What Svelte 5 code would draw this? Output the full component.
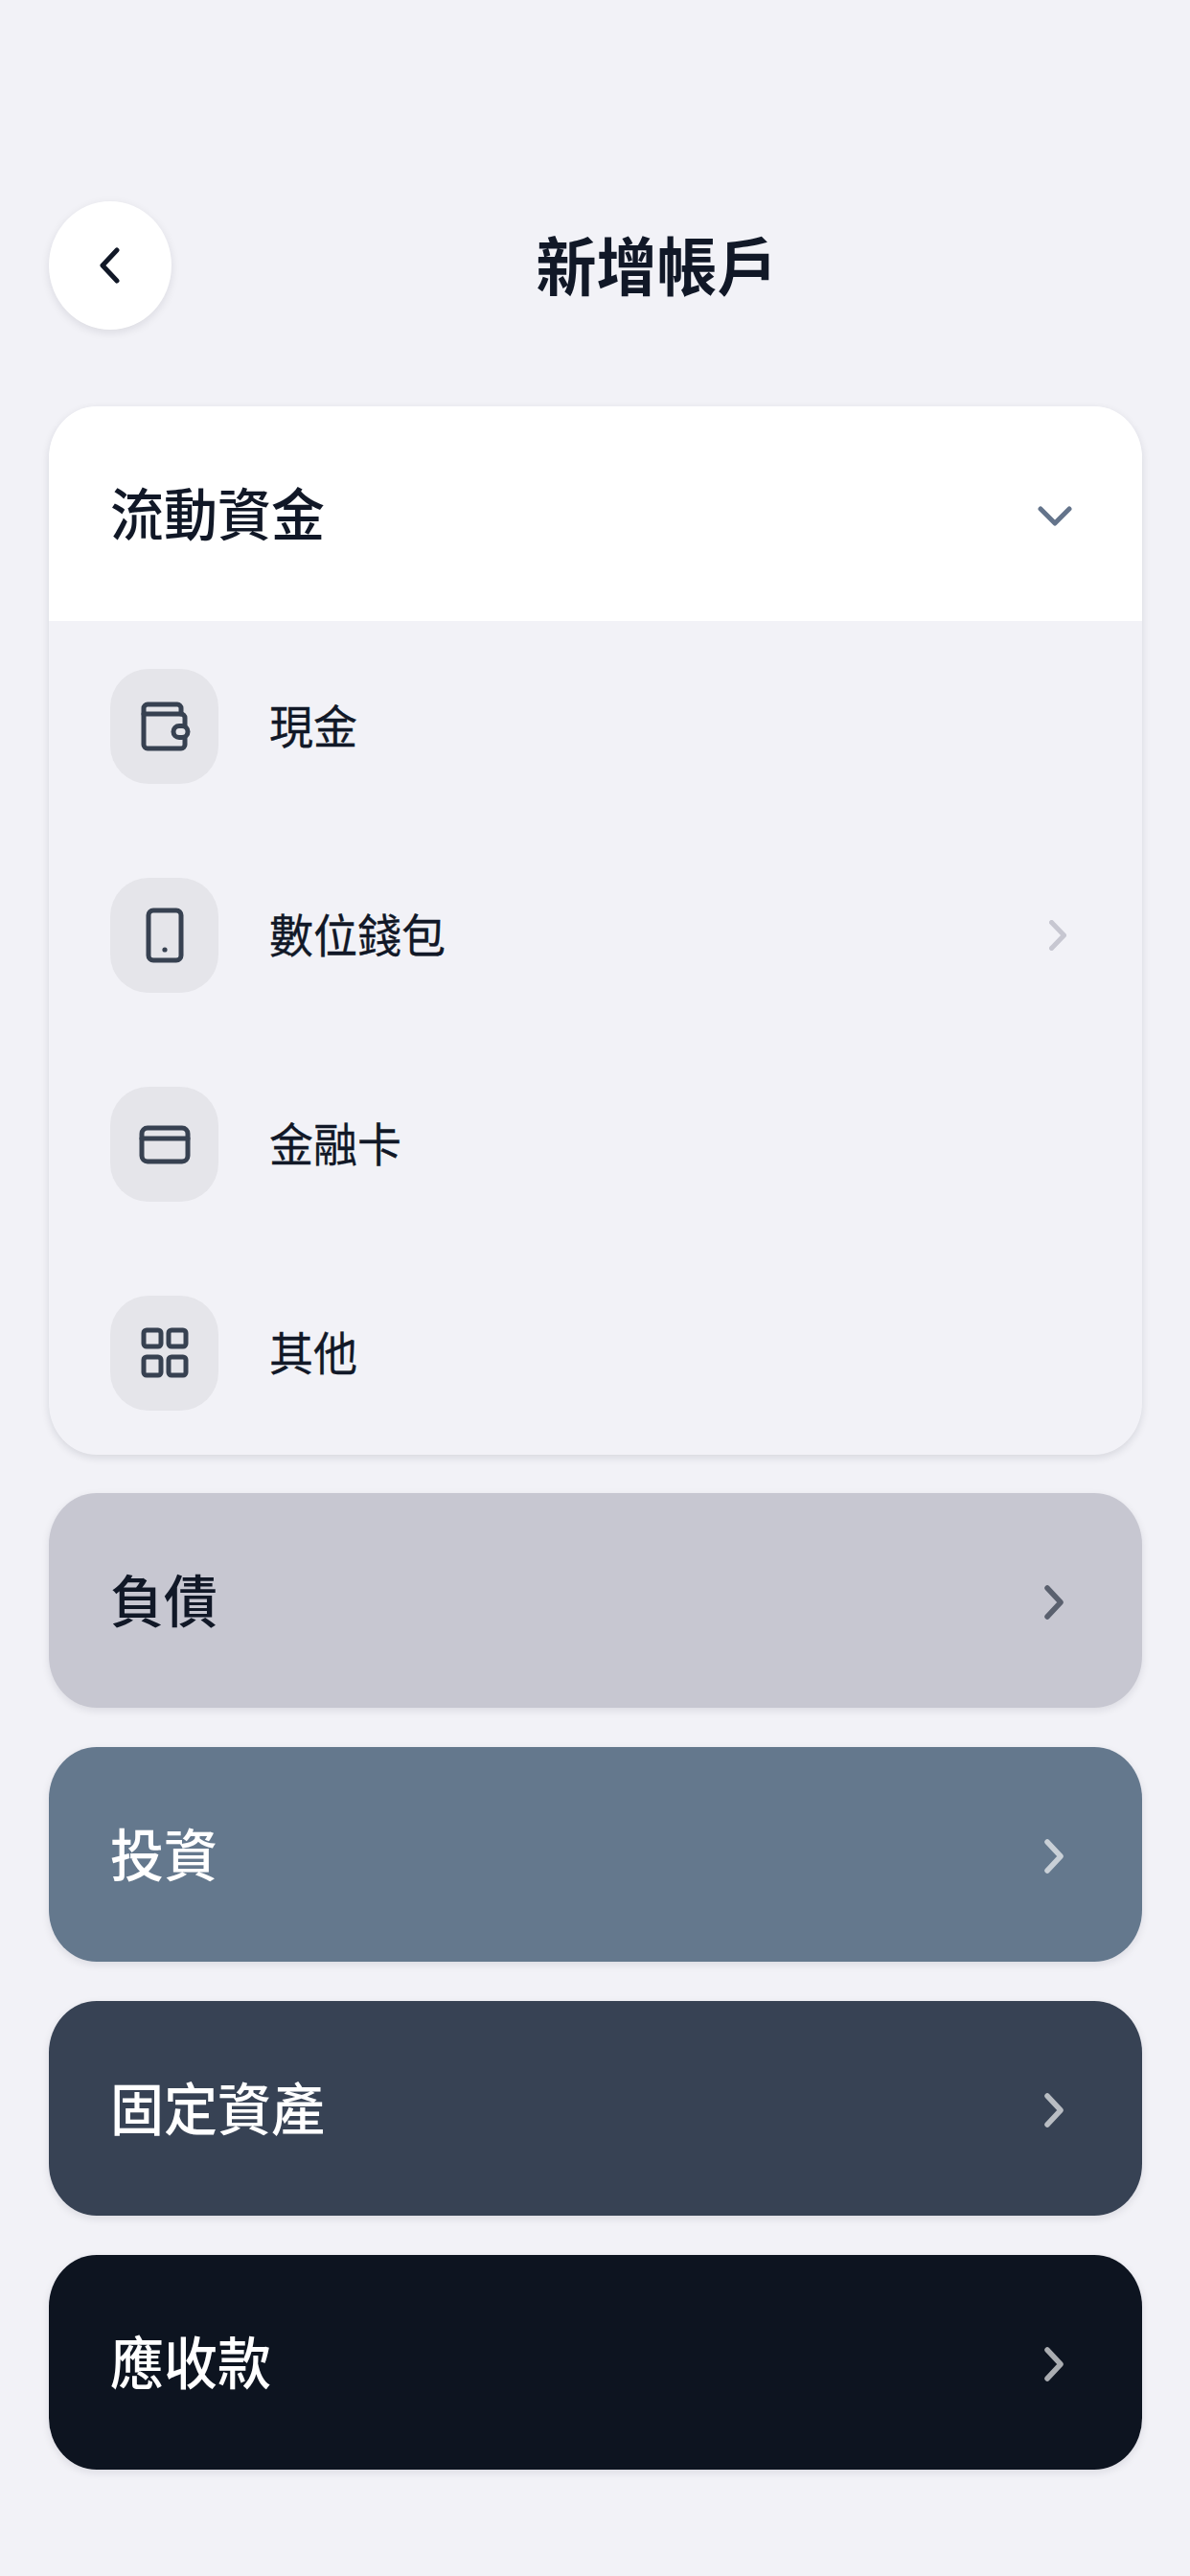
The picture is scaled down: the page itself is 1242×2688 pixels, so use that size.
<script>
  const bars = [
    { label: '負債', cls: 'debt' },
    { label: '投資', cls: 'invest' },
    { label: '固定資產', cls: 'fixed' },
    { label: '應收款', cls: 'recv' }
  ];
</script>

<div class="page">
  <header class="top">
    <button class="back" aria-label="返回">
      <svg width="21" height="38" viewBox="0 0 21 38"><path d="M18 3 L3 19 L18 35" /></svg>
    </button>
    <h1>新增帳戶</h1>
  </header>

  <section class="card">
    <div class="card-head">
      <span class="head-label">流動資金</span>
      <svg class="down" width="36" height="22" viewBox="0 0 36 22"><path d="M3 3 L18 18 L33 3" /></svg>
    </div>
    <div class="rows">
      <div class="row">
        <span class="tile">
          <svg width="113" height="120" viewBox="0 0 113 120">
            <path d="M74 47V41a4 4 0 0 0-4-4H39a4 4 0 0 0-4 4V79a4 4 0 0 0 4 4H74a4 4 0 0 0 4-4V72" />
            <path d="M35 47H74a4 4 0 0 1 4 4V59" />
            <rect x="66" y="59.5" width="15" height="12" rx="6" />
          </svg>
        </span>
        <span class="row-label">現金</span>
      </div>
      <div class="row">
        <span class="tile">
          <svg width="113" height="120" viewBox="0 0 113 120">
            <rect x="40" y="34" width="34" height="52" rx="5" />
            <circle class="dot" cx="57" cy="75" r="2.6" />
          </svg>
        </span>
        <span class="row-label">數位錢包</span>
        <svg class="next" width="18" height="32" viewBox="0 0 18 32"><path d="M2.5 2.5 L15.5 16 L2.5 29.5" /></svg>
      </div>
      <div class="row">
        <span class="tile">
          <svg width="113" height="120" viewBox="0 0 113 120">
            <rect x="33" y="43" width="48" height="35" rx="6" />
            <path d="M33 54H81" />
          </svg>
        </span>
        <span class="row-label">金融卡</span>
      </div>
      <div class="row">
        <span class="tile">
          <svg width="113" height="120" viewBox="0 0 113 120">
            <rect x="35" y="36" width="18" height="17" rx="3" />
            <rect x="61" y="36" width="18" height="17" rx="3" />
            <rect x="35" y="64" width="18" height="19" rx="3" />
            <rect x="61" y="64" width="18" height="19" rx="3" />
          </svg>
        </span>
        <span class="row-label">其他</span>
      </div>
    </div>
  </section>

  <div class="bars">
    {#each bars as bar}
      <div class="bar {bar.cls}">
        <span class="head-label">{bar.label}</span>
        <svg width="20" height="36" viewBox="0 0 20 36"><path d="M3 3 L17 18 L3 33" /></svg>
      </div>
    {/each}
  </div>
</div>

<style>
  :global(body) {
    margin: 0;
    background: #f2f2f7;
  }
  .page {
    box-sizing: border-box;
    width: 1242px;
    height: 2688px;
    padding: 210px 50px 0 51px;
    background: #f2f2f7;
    color: #111827;
    font-family: Inter, "Noto Sans CJK TC", sans-serif;
  }
  .top {
    display: flex;
    align-items: center;
    height: 134px;
    margin-bottom: 80px;
  }
  .back {
    flex: none;
    display: flex;
    align-items: center;
    justify-content: center;
    width: 128px;
    height: 134px;
    padding: 0 2px 0 0;
    border: 0;
    border-radius: 50%;
    background: #fff;
    box-shadow: 0 3px 10px rgba(17, 24, 39, 0.1);
  }
  .back path {
    fill: none;
    stroke: #111827;
    stroke-width: 5;
    stroke-linecap: round;
    stroke-linejoin: round;
  }
  h1 {
    flex: 1;
    margin: 3px 0 0;
    text-align: center;
    font-size: 63px;
    line-height: 134px;
    font-weight: 700;
    transform: scaleY(1.05);
  }
  .card {
    height: 1094px;
    border-radius: 50px / 54px;
    overflow: hidden;
    box-shadow: 0 3px 8px rgba(17, 24, 39, 0.12);
    margin-bottom: 40px;
  }
  .card-head {
    display: flex;
    align-items: center;
    justify-content: space-between;
    height: 224px;
    padding: 0 73px 0 64px;
    background: #fff;
  }
  .head-label {
    margin-bottom: 5px;
    font-size: 56px;
    font-weight: 500;
    transform: scaleY(1.05);
  }
  .down {
    margin-top: 5px;
  }
  .down path {
    fill: none;
    stroke: #64748b;
    stroke-width: 5;
    stroke-linecap: round;
    stroke-linejoin: round;
  }
  .rows {
    display: flex;
    flex-direction: column;
    gap: 98px;
    padding: 50px 79px 0 64px;
  }
  .row {
    display: flex;
    align-items: center;
    height: 120px;
  }
  .tile {
    flex: none;
    width: 113px;
    height: 120px;
    border-radius: 40px;
    background: #e5e5ea;
  }
  .tile svg {
    display: block;
  }
  .tile :global(path),
  .tile :global(rect) {
    fill: none;
    stroke: #374151;
    stroke-width: 5;
    stroke-linecap: round;
    stroke-linejoin: round;
  }
  .tile .dot {
    fill: #374151;
  }
  .row-label {
    flex: 1;
    margin-left: 53px;
    margin-bottom: 6px;
    font-size: 46px;
    font-weight: 400;
    -webkit-text-stroke: 0.3px currentColor;
    transform-origin: left center;
    transform: scaleY(1.05);
  }
  .next path {
    fill: none;
    stroke: #c7c7d1;
    stroke-width: 5;
    stroke-linecap: round;
    stroke-linejoin: round;
  }
  .bars {
    display: flex;
    flex-direction: column;
    gap: 41px;
  }
  .bar {
    display: flex;
    align-items: center;
    justify-content: space-between;
    height: 224px;
    padding: 0 82px 0 64px;
    border-radius: 50px / 54px;
    box-shadow: 0 3px 8px rgba(17, 24, 39, 0.1);
    color: #fff;
  }
  .bar svg {
    margin-top: 4px;
  }
  .bar path {
    fill: none;
    stroke: rgba(255, 255, 255, 0.65);
    stroke-width: 5.5;
    stroke-linecap: round;
    stroke-linejoin: round;
  }
  .debt {
    background: #c7c7d1;
    color: #111827;
  }
  .debt path {
    stroke: #5a606e;
  }
  .invest {
    background: #64788d;
  }
  .fixed {
    background: #374254;
  }
  .recv {
    background: #0d1420;
  }
</style>
